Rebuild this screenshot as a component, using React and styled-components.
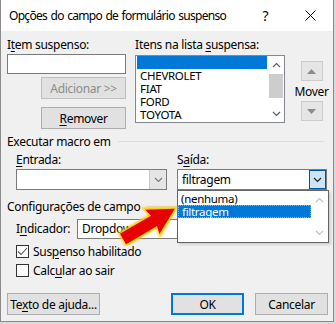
import React from 'react';
import styled, { createGlobalStyle } from 'styled-components';

const GlobalStyle = createGlobalStyle`
  html, body {
    margin: 0;
    padding: 0;
    background: #d9d9d9;
  }
  body {
    font-family: "Segoe UI", "Noto Sans", "Open Sans", sans-serif;
    font-size: 12px;
    letter-spacing: -0.3px;
    color: #000;
  }
  * {
    box-sizing: border-box;
  }
`;

const Window = styled.div`
    position: relative;
    width: 334px;
    height: 322px;
    background: #f0f0f0;
    border: 1px solid #8a8a8a;
    border-top: none;
    display: flex;
    flex-direction: column;
`;

const TitleBar = styled.div`
    height: 31px;
    background: #fff;
    display: flex;
    align-items: center;
    padding-left: 8px;
`;

const Title = styled.div`
    font-size: 12px;
    letter-spacing: -0.7px;
    word-spacing: 1px;
    flex: 1;
    white-space: nowrap;
`;

const TitleButton = styled.div`
    width: 45px;
    height: 31px;
    display: flex;
    align-items: center;
    justify-content: center;
    font-size: 14px;
`;

const Body = styled.div`
    flex: 1;
    display: flex;
    flex-direction: column;
    padding: 6px 5px 0 6px;
`;

const TopRow = styled.div`
    display: flex;
`;

const Column = styled.div`
    display: flex;
    flex-direction: column;
    width: ${p => p.$w}px;
    margin-left: ${p => p.$ml || 0}px;
    align-items: ${p => p.$center ? 'center' : 'stretch'};
`;

const Label = styled.div`
    line-height: 16px;
    height: 16px;
    white-space: nowrap;
    width: ${p => p.$w ? `${p.$w}px` : 'auto'};
    margin-top: ${p => p.$mt || 0}px;
`;

const Key = styled.span`
    text-decoration: underline;
    text-underline-offset: 2px;
`;

const TextBox = styled.div`
    height: 20px;
    width: ${p => p.$w ? `${p.$w}px` : 'auto'};
    margin-top: ${p => p.$mt || 0}px;
    background: #fff;
    border: 1px solid #7a7a7a;
    line-height: 18px;
    padding-left: 4px;
    overflow: hidden;
    white-space: nowrap;
`;

const Button = styled.div`
    width: ${p => p.$w}px;
    height: 22px;
    margin-top: ${p => p.$mt || 0}px;
    align-self: ${p => p.$end ? 'flex-end' : 'auto'};
    background: #e1e1e1;
    border: ${p => p.$default ? '2px solid #0078d7' : p.$disabled ? '1px solid #bfbfbf' : '1px solid #adadad'};
    color: ${p => p.$disabled ? '#8c8c8c' : '#000'};
    display: flex;
    align-items: center;
    justify-content: center;
    white-space: nowrap;
`;

const ListBox = styled.div`
    margin-top: 2px;
    height: 68px;
    background: #fff;
    border: 1px solid #828790;
    display: flex;
`;

const Items = styled.div`
    flex: 1;
    padding: 0 1px;
    overflow: hidden;
`;

const Item = styled.div`
    height: 13px;
    padding-left: 3px;
    font-size: 11.5px;
    white-space: nowrap;
    background: ${p => p.$selected ? '#0078d7' : 'transparent'};
    color: ${p => p.$selected ? '#fff' : '#000'};
    border: ${p => p.$focus ? '1px dotted #f2a33a' : 'none'};
    line-height: ${p => p.$focus ? '11px' : '13px'};
`;

const ScrollBar = styled.div`
    width: ${p => p.$w || 16}px;
    display: flex;
    flex-direction: column;
    background: #fff;
`;

const ScrollArrow = styled.div`
    height: ${p => p.$h || 17}px;
    display: flex;
    align-items: center;
    justify-content: center;
`;

const Track = styled.div`
    flex: 1;
    padding: ${p => p.$thumb ? '1px 1px 7px' : '0'};
    display: flex;
`;

const Thumb = styled.div`
    flex: 1;
    background: #cdcdcd;
`;

const MoveButton = styled.div`
    width: 22px;
    height: 20px;
    margin-top: ${p => p.$mt || 0}px;
    background: #e5e5e5;
    border: 1px solid #cccccc;
    display: flex;
    align-items: center;
    justify-content: center;
`;

const GroupHeader = styled.div`
    display: flex;
    align-items: center;
    height: 16px;
    margin-top: ${p => p.$mt}px;
    margin-right: 4px;
    white-space: nowrap;
`;

const GroupLine = styled.div`
    flex: 1;
    margin-left: 7px;
    border-top: 1px solid #dcdcdc;
`;

const GroupRow = styled.div`
    display: flex;
    padding-left: 9px;
    margin-top: ${p => p.$mt || 0}px;
    align-items: ${p => p.$center ? 'center' : 'flex-start'};
    gap: ${p => p.$gap || 0}px;
`;

const Combo = styled.div`
    height: 21px;
    margin-top: 1px;
    background: #fff;
    border: 1px solid #7a7a7a;
    display: flex;
`;

const ComboText = styled.div`
    flex: 1;
    line-height: 19px;
    padding-left: 4px;
`;

const ComboArrow = styled.div`
    width: 17px;
    display: flex;
    align-items: center;
    justify-content: center;
    background: ${p => p.$hot ? '#cce4f7' : '#e5e5e5'};
    border: ${p => p.$hot ? '1px solid #005499' : 'none'};
    border-left: ${p => p.$hot ? '1px solid #005499' : '1px solid #c8c8c8'};
`;

const Check = styled.div`
    display: flex;
    align-items: center;
    gap: 4px;
    height: 16px;
    padding-left: 9px;
    margin-top: ${p => p.$mt}px;
    white-space: nowrap;
`;

const Box = styled.div`
    width: 13px;
    height: 13px;
    background: #fff;
    border: 1px solid #333;
    display: flex;
    align-items: center;
    justify-content: center;
`;

const ButtonRow = styled.div`
    display: flex;
    gap: 11px;
    margin-top: 15px;
`;

const Spacer = styled.div`
    flex: 1;
`;

const DropList = styled.div`
    position: absolute;
    left: 176px;
    top: 190px;
    width: 152px;
    height: 53px;
    background: #fff;
    border: 1px solid #646464;
    display: flex;
    box-shadow: 2px 2px 2px rgba(0, 0, 0, 0.12);
`;

const DropItems = styled.div`
    flex: 1;
    padding-top: 1px;
`;

const Pointer = styled.svg`
    position: absolute;
    left: 107px;
    top: 196px;
`;

const Chevron = ({ up, color = '#606060' }) => (
    <svg width="9" height="6" viewBox="0 0 9 6">
        <polyline
            points={up ? '1,5 4.5,1.5 8,5' : '1,1 4.5,4.5 8,1'}
            fill="none"
            stroke={color}
            strokeWidth="1.2"
        />
    </svg>
);

const Triangle = ({ up }) => (
    <svg width="9" height="5" viewBox="0 0 9 5">
        <polygon points={up ? '0,5 4.5,0 9,5' : '0,0 9,0 4.5,5'} fill="#8c8c8c" />
    </svg>
);

const App = () => {
    const items = ['CHEVROLET', 'FIAT', 'FORD', 'TOYOTA'];

    return (
        <>
            <GlobalStyle />
            <Window>
                <TitleBar>
                    <Title>Opções do campo de formulário suspenso</Title>
                    <TitleButton>?</TitleButton>
                    <TitleButton>
                        <svg width="11" height="11" viewBox="0 0 11 11">
                            <path d="M0.5 0.5 L10.5 10.5 M10.5 0.5 L0.5 10.5" stroke="#000" strokeWidth="1" />
                        </svg>
                    </TitleButton>
                </TitleBar>

                <Body>
                    <TopRow>
                        <Column $w={120}>
                            <Label>I<Key>t</Key>em suspenso:</Label>
                            <TextBox $mt={1} />
                            <Button $w={85} $mt={3} $end $disabled>Adicionar &gt;&gt;</Button>
                            <Button $w={85} $mt={8} $end><span><Key>R</Key>emover</span></Button>
                        </Column>

                        <Column $w={151} $ml={9}>
                            <Label>Itens na lista <Key>s</Key>uspensa:</Label>
                            <ListBox>
                                <Items>
                                    <Item $selected />
                                    {items.map(name => (
                                        <Item key={name}>{name}</Item>
                                    ))}
                                </Items>
                                <ScrollBar>
                                    <ScrollArrow><Chevron up /></ScrollArrow>
                                    <Track $thumb><Thumb /></Track>
                                    <ScrollArrow><Chevron /></ScrollArrow>
                                </ScrollBar>
                            </ListBox>
                        </Column>

                        <Column $w={33} $ml={10} $center>
                            <MoveButton $mt={24}><Triangle up /></MoveButton>
                            <Label $mt={3}>Mover</Label>
                            <MoveButton $mt={1}><Triangle /></MoveButton>
                        </Column>
                    </TopRow>

                    <GroupHeader $mt={4}>
                        <span>Executar macro em</span>
                        <GroupLine />
                    </GroupHeader>

                    <GroupRow $mt={3} $gap={10}>
                        <Column $w={151}>
                            <Label><Key>E</Key>ntrada:</Label>
                            <Combo>
                                <ComboText />
                                <ComboArrow><Chevron color="#7a7a7a" /></ComboArrow>
                            </Combo>
                        </Column>
                        <Column $w={150}>
                            <Label>S<Key>a</Key>ída:</Label>
                            <Combo>
                                <ComboText>filtragem</ComboText>
                                <ComboArrow $hot><Chevron color="#222" /></ComboArrow>
                            </Combo>
                        </Column>
                    </GroupRow>

                    <GroupHeader $mt={8}>
                        <span>Configurações de campo</span>
                        <GroupLine />
                    </GroupHeader>

                    <GroupRow $mt={5} $center>
                        <Label $w={61}>I<Key>n</Key>dicador:</Label>
                        <TextBox $w={250}>Dropdown</TextBox>
                    </GroupRow>

                    <Check $mt={4}>
                        <Box>
                            <svg width="11" height="9" viewBox="0 0 11 9">
                                <polyline points="1,4.5 4,7.5 10,1" fill="none" stroke="#555" strokeWidth="1.1" />
                            </svg>
                        </Box>
                        <span>Sus<Key>p</Key>enso habilitado</span>
                    </Check>
                    <Check $mt={3}>
                        <Box />
                        <span>Calc<Key>u</Key>lar ao sair</span>
                    </Check>

                    <ButtonRow>
                        <Button $w={93}><span>Te<Key>x</Key>to de ajuda...</span></Button>
                        <Spacer />
                        <Button $w={73} $default>OK</Button>
                        <Button $w={73}>Cancelar</Button>
                    </ButtonRow>
                </Body>

                <DropList>
                    <DropItems>
                        <Item>(nenhuma)</Item>
                        <Item $selected $focus>filtragem</Item>
                    </DropItems>
                    <ScrollBar $w={17}>
                        <ScrollArrow $h={18}><Chevron up color="#c2c2c2" /></ScrollArrow>
                        <Track />
                        <ScrollArrow $h={18}><Chevron color="#c2c2c2" /></ScrollArrow>
                    </ScrollBar>
                </DropList>

                <Pointer width="80" height="50" viewBox="107 196 80 50">
                    <defs>
                        <filter id="glow" x="-20%" y="-20%" width="140%" height="140%">
                            <feGaussianBlur stdDeviation="0.8" />
                        </filter>
                    </defs>
                    <g transform="translate(122 239) rotate(-30.3)">
                        <polygon
                            points="0,-6.5 36,-6.5 34,-15 61,0 34,15 36,6.5 0,6.5"
                            fill="#ffc800"
                            stroke="#ffc800"
                            strokeWidth="3"
                            filter="url(#glow)"
                        />
                        <polygon
                            points="0,-6 36,-6 34,-14 60,0 34,14 36,6 0,6"
                            fill="#e60000"
                        />
                    </g>
                </Pointer>
            </Window>
        </>
    );
};

export default App;
